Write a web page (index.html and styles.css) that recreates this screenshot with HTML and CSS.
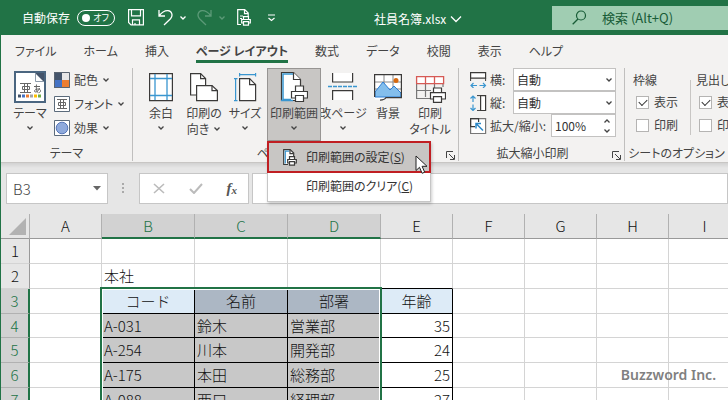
FILE: index.html
```html
<!DOCTYPE html>
<html lang="ja">
<head>
<meta charset="utf-8">
<title>社員名簿.xlsx</title>
<link rel="stylesheet" href="styles.css">
</head>
<body>
<svg class="defs" width="0" height="0" aria-hidden="true">
  <symbol id="chev" viewBox="0 0 8 6"><path d="M1.5 1.5 4 4l2.500-2.500" fill="none" stroke="currentColor" stroke-width="1.300"/></symbol>
  <symbol id="launch" viewBox="0 0 9 9"><path d="M.5 7V.5H7M3 3l5 5M8.500 4v4.500H4" fill="none" stroke="currentColor"/></symbol>
  <symbol id="printpage" viewBox="0 0 28 32">
    <path d="M1.500 1.500h12l7 7v21h-19z" fill="#fff" stroke="#3b3a39" stroke-width="1.200"/>
    <path d="M11 28.500H3V3h10" fill="none" stroke="#3a96d0" stroke-width="1.500"/>
    <path d="M1 29.500h12" stroke="#3a96d0" stroke-width="1.500"/>
    <path d="M13.500 1.500v7h7" fill="#fff" stroke="#3b3a39" stroke-width="1.200"/>
    <path d="M15.500 21v-6h8v6M15.500 27h-4v-6.500h16V27h-4M15.500 24.500h8v6h-8z" fill="#fff" stroke="#3b3a39" stroke-width="1.200"/>
  </symbol>
  <symbol id="printsmall" viewBox="0 0 15 17">
    <path d="M5 15.500H.7V.6h6.500l3.500 3.500V7" fill="#fff" stroke="#3b3a39" stroke-width="1.200"/>
    <path d="M2.300 14.500V2.200h4" fill="none" stroke="#3a96d0" stroke-width="1.200"/>
    <path d="M7 .6v4h3.700" fill="none" stroke="#3b3a39" stroke-width="1.200"/>
    <path d="M6.500 10.500V7.600h5v2.900M6.500 14H4.700v-3.500h8.600V14h-1.800M6.500 12.700h5v3.500h-5z" fill="#fff" stroke="#3b3a39" stroke-width="1.200"/>
  </symbol>
</svg>

<header class="titlebar">
  <div class="quick">
    <span class="autosave" id="autosave">自動保存</span>
    <button class="toggle" role="switch" aria-checked="false" aria-labelledby="autosave"><i></i>オフ</button>
    <button class="icon save" aria-label="保存"><svg width="16" height="17" viewBox="0 0 16 17"><path d="M.6.6h14.800v15.300H3L.6 13.500zM3.500.6v6.200h9V.6M4.500 15.900v-5h7v5M7 15.900v-2" fill="none" stroke="currentColor" stroke-width="1.200"/></svg></button>
    <button class="icon undo" aria-label="元に戻す"><svg width="15" height="17" viewBox="0 0 15 17"><path d="M1 1v6h6M1 7C4 3 7 1.500 10 1.700c4 .3 5.200 5 2.500 8L6 16" fill="none" stroke="currentColor" stroke-width="1.300"/></svg><svg width="8" height="6"><use href="#chev"/></svg></button>
    <button class="icon redo" aria-label="やり直し"><svg width="15" height="17" viewBox="0 0 15 17"><path d="M14 1v6H8M14 7C11 3 8 1.500 5 1.700c-4 .3-5.200 5-2.500 8L9 16" fill="none" stroke="currentColor" stroke-width="1.300"/></svg><svg width="8" height="6"><use href="#chev"/></svg></button>
    <button class="icon preview" aria-label="印刷プレビュー"><svg width="15" height="17" viewBox="0 0 15 17"><path d="M4 15.500H.7V.6h7l3.500 3.500V7M7.500.6v4h3.700M3 7h3M3 9.500h2" fill="none" stroke="currentColor" stroke-width="1.200"/><path d="M6.500 10.500V7.600h5v2.900M6.500 14H4.700v-3.500h8.600V14h-1.800M6.500 12.700h5v3.500h-5z" fill="none" stroke="currentColor" stroke-width="1.200"/></svg></button>
    <button class="icon custom" aria-label="カスタマイズ"><svg width="9" height="8" viewBox="0 0 9 8"><path d="M1 1h7M1.500 4l3 2.500 3-2.500" fill="none" stroke="currentColor" stroke-width="1.200"/></svg></button>
  </div>
  <button class="doc">社員名簿.xlsx<svg width="12" height="8" viewBox="0 0 12 8"><path d="M1 1.500 6 6.500l5-5" fill="none" stroke="currentColor" stroke-width="1.300"/></svg></button>
  <label class="search"><svg width="15" height="15" viewBox="0 0 15 15"><circle cx="9" cy="5.500" r="4.500" fill="none" stroke="currentColor" stroke-width="1.200"/><path d="M6 9 .7 14.300" stroke="currentColor" stroke-width="1.300"/></svg><input type="text" placeholder="検索 (Alt+Q)" aria-label="検索"></label>
</header>

<nav class="tabs">
  <a href="#file">ファイル</a><a href="#home">ホーム</a><a href="#insert">挿入</a><a href="#layout" class="active" aria-current="page">ページ レイアウト</a><a href="#formula">数式</a><a href="#data">データ</a><a href="#review">校閲</a><a href="#view">表示</a><a href="#help">ヘルプ</a>
</nav>

<section class="ribbon">
  <div class="group theme">
    <div class="tools">
      <button class="big"><svg width="32" height="32" viewBox="0 0 32 32"><path d="M1 1h30v30H1z" fill="#fff" stroke="#4b6680" stroke-width="2"/><path d="M21 2h9v9z" fill="#44546a"/><path d="M21.500 2v8.500H30" fill="none" stroke="#8d9baa"/><path d="M6 12.500h11M6 21.500h11M8.500 15.500h7v3h-7zM10.500 12.500v9M13.500 12.500v9" fill="none" stroke="#666"/><path d="M20 15.500h6M22.500 13.500c-.6 3 0 6 1 8M25.500 17c-1 4-5 5-5 3s5.500-3 6-.5c.2 1.200-.5 2-2 2.200" fill="none" stroke="#666"/><path d="M4 23.500h3v3H4z" fill="#44546a"/><path d="M8 23.500h3v3H8z" fill="#4472c4"/><path d="M12 23.500h3v3h-3z" fill="#ed7d31"/><path d="M16 23.500h3v3h-3z" fill="#a5a5a5"/><path d="M20 23.500h3v3h-3z" fill="#ffc000"/><path d="M24 23.500h3v3h-3z" fill="#70ad47"/></svg><span>テーマ</span><svg class="chev" width="8" height="6"><use href="#chev"/></svg></button>
      <div class="stack">
        <button><svg width="16" height="16"><path d="M0 0h8v8H0z" fill="#44546a"/><path d="M8 0h8v8H8z" fill="#e7e6e6"/><path d="M0 8h8v8H0z" fill="#4472c4"/><path d="M8 8h8v8H8z" fill="#ed7d31"/><path d="M.5.5h15v15H.5z" fill="none" stroke="#5a6470"/></svg>配色<svg width="8" height="6"><use href="#chev"/></svg></button>
        <button><svg width="16" height="16"><path d="M.5.5h15v15H.5z" fill="#fff" stroke="#5b6b7b"/><path d="M3 3.500h10M3 12.500h10M4.500 6.500h7v3h-7zM6.500 3.500v9M9.500 3.500v9" fill="none" stroke="#666"/></svg>フォント<svg width="8" height="6"><use href="#chev"/></svg></button>
        <button><svg width="16" height="16"><path d="M.5.5h15v15H.5z" fill="#fff" stroke="#5b6b7b"/><circle cx="8" cy="8" r="5.800" fill="#8faadc" stroke="#5576b8"/></svg>効果<svg width="8" height="6"><use href="#chev"/></svg></button>
      </div>
    </div>
    <h2>テーマ</h2>
  </div>

  <div class="group page">
    <div class="tools">
      <button class="big w40"><svg width="24" height="32" viewBox="0 0 24 32"><path d="M.6 2.600h22.800v27H.6z" fill="#fff" stroke="#3b3a39" stroke-width="1.200"/><path d="M6 3v26M18 3v26M1 7.500h22M1 24.500h22" stroke="#3a96d0" stroke-width="1.300"/></svg><span>余白</span><svg class="chev" width="8" height="6"><use href="#chev"/></svg></button>
      <button class="big w46"><svg width="30" height="32" viewBox="0 0 30 32"><path d="M1.600 2.600h10l5 5V24h-15z" fill="#fff" stroke="#3b3a39" stroke-width="1.200"/><path d="M11.600 2.600v5h5" fill="none" stroke="#3b3a39" stroke-width="1.200"/><path d="M7.600 14.600H23l5.400 5v10H7.600z" fill="#fff" stroke="#3b3a39" stroke-width="1.200"/><path d="M23 14.600v5h5.400" fill="none" stroke="#3b3a39" stroke-width="1.200"/></svg><span>印刷の</span><span class="line">向き<svg width="8" height="6"><use href="#chev"/></svg></span></button>
      <button class="big w36"><svg width="24" height="32" viewBox="0 0 24 32"><path d="M6.600 7.600h10l6 6v16h-16z" fill="#fff" stroke="#3b3a39" stroke-width="1.200"/><path d="M16.600 7.600v6h6" fill="none" stroke="#3b3a39" stroke-width="1.200"/><path d="M6.600 3.600h16M6.600 2v3.500M22.600 2v3.500M2.600 7.600v22M1 7.600h3.500M1 29.600h3.500" stroke="#3a96d0" stroke-width="1.200"/></svg><span>サイズ</span><svg class="chev" width="8" height="6"><use href="#chev"/></svg></button>
      <div class="dropdown">
        <button class="big open" aria-expanded="true"><svg width="28" height="32"><use href="#printpage"/></svg><span>印刷範囲</span><svg class="chev" width="8" height="6"><use href="#chev"/></svg></button>
        <div class="menu" role="menu">
          <button role="menuitem" class="hot"><svg width="15" height="17"><use href="#printsmall"/></svg><span>印刷範囲の設定(<u>S</u>)</span></button>
          <button role="menuitem"><span>印刷範囲のクリア(<u>C</u>)</span></button>
          <svg class="pointer" width="13" height="20" viewBox="0 0 13 20"><path d="M1 1v14.500l3.500-3.200 2.600 6 2.600-1.100-2.600-5.900H12z" fill="#fff" stroke="#222"/></svg>
        </div>
      </div>
      <button class="big w44"><svg width="30" height="32" viewBox="0 0 30 32"><path d="M4.600 2v9h20V2M4.600 29V19.600h20V29" fill="#fff" stroke="#3b3a39" stroke-width="1.200"/><path d="M0 15.500h30" stroke="#3a96d0" stroke-width="1.300" stroke-dasharray="4 1"/></svg><span>改ページ</span><svg class="chev" width="8" height="6"><use href="#chev"/></svg></button>
      <button class="big w46"><svg width="28" height="32" viewBox="0 0 28 32"><path d="M.6 3.600h26.800v23H11l-4 2H.6z" fill="#fff"/><path d="M10 4v22M19 4v22M1 11h26M1 18h26" stroke="#888"/><path d="M1 21 9 11l7 8 4-4 7 7v4H1z" fill="#83beec" stroke="#2b7cd3"/><circle cx="22" cy="9.500" r="2.500" fill="#d8690f"/><path d="M.6 26V3.600h26.800v23H12c-1 2-3 2.500-6 2.500" fill="none" stroke="#3b3a39" stroke-width="1.200"/></svg><span>背景</span></button>
      <button class="big w38"><svg width="31" height="32" viewBox="0 0 31 32"><path d="M1.600 12v15.500H15M10.500 12v14M19.500 12v5M1.600 19.500H16M28 12v4" fill="none" stroke="#777" stroke-width="1.200"/><path d="M1.600 5.600h27v7h-27zM10.500 5.600v7M19.500 5.600v7" fill="#fff" stroke="#d65a55" stroke-width="1.300"/><path d="M18.500 22v-5h8v5M18.500 28h-3v-6.400h15V28h-4M18.500 25.600h8v5.800h-8z" fill="#fff" stroke="#3b3a39" stroke-width="1.200"/></svg><span>印刷</span><span>タイトル</span></button>
    </div>
    <h2 class="with-launch">ページ設定</h2>
    <button class="launch" aria-label="ページ設定"><svg width="9" height="9"><use href="#launch"/></svg></button>
  </div>

  <div class="group scale">
    <div class="tools fields">
      <div class="field"><svg width="17" height="16" viewBox="0 0 17 16"><path d="M.6.6h15v5.500H.6z" fill="#fff" stroke="#3b3a39" stroke-width="1.200"/><path d="M.6 6v3M15.600 6v3" stroke="#3b3a39"/><path d="M1 13.500h6M9.500 13.500h6M3.500 11 1 13.500 3.500 16M13 11l2.500 2.500L13 16" fill="none" stroke="#3a96d0" stroke-width="1.200"/></svg><label for="w">横:</label><span class="box"><select id="w"><option>自動</option></select><svg width="8" height="6"><use href="#chev"/></svg></span></div>
      <div class="field"><svg width="17" height="16" viewBox="0 0 17 16"><path d="M10.600.6h5v15h-5z" fill="#fff" stroke="#3b3a39" stroke-width="1.200"/><path d="M7 .6h3M7 15.600h3" stroke="#3b3a39"/><path d="M3 1v6M3 9.500v6M.5 3.500 3 1l2.500 2.500M.5 13 3 15.500 5.500 13" fill="none" stroke="#3a96d0" stroke-width="1.200"/></svg><label for="h">縦:</label><span class="box"><select id="h"><option>自動</option></select><svg width="8" height="6"><use href="#chev"/></svg></span></div>
      <div class="field"><svg width="17" height="16" viewBox="0 0 17 16"><path d="M.6.600h15v15H.6z" fill="#fff" stroke="#777" stroke-width="1.200"/><path d="M5 8.600H.6V.6h8V4" fill="none" stroke="#3b3a39" stroke-width="1.200"/><path d="M6 5.500l7 7M6 10.500v-5h5" fill="none" stroke="#2b88c8" stroke-width="1.500"/></svg><label for="z">拡大/縮小:</label><span class="box zoom"><input id="z" type="text" value="100%"><span class="spin"><svg class="up" width="8" height="6"><use href="#chev"/></svg><svg width="8" height="6"><use href="#chev"/></svg></span></span></div>
    </div>
    <h2 class="with-launch">拡大縮小印刷</h2>
    <button class="launch" aria-label="拡大縮小印刷"><svg width="9" height="9"><use href="#launch"/></svg></button>
  </div>

  <div class="group options">
    <div class="tools">
      <fieldset><legend>枠線</legend><label><input type="checkbox" checked>表示</label><label><input type="checkbox">印刷</label></fieldset>
      <fieldset><legend>見出し</legend><label><input type="checkbox" checked>表示</label><label><input type="checkbox">印刷</label></fieldset>
    </div>
    <h2>シートのオプション</h2>
  </div>
</section>

<div class="formula">
  <div class="name"><input type="text" value="B3" aria-label="名前ボックス"><svg width="8" height="5"><path d="M0 0h8L4 4.500z" fill="#666"/></svg></div>
  <svg class="dots" width="2" height="11"><path d="M0 0h2v2H0zM0 4h2v2H0zM0 8h2v2H0z" fill="#aaa"/></svg>
  <div class="fx">
    <button aria-label="キャンセル"><svg width="12" height="11"><path d="m1 1 10 9M11 1 1 10" stroke="#bbb" stroke-width="1.600"/></svg></button>
    <button aria-label="入力"><svg width="14" height="11"><path d="m1 6 4 4 8-9" fill="none" stroke="#bbb" stroke-width="2"/></svg></button>
    <button class="fn" aria-label="関数の挿入">f<sub>x</sub></button>
  </div>
  <input class="bar" type="text" aria-label="数式バー">
</div>

<main class="sheet">
  <table>
    <colgroup><col class="c0"><col class="c1"><col class="c2"><col class="c2"><col class="c2"><col class="c1"><col class="c1"><col class="c1"><col class="c1"><col class="c1"></colgroup>
    <thead><tr><th class="corner"><svg width="17" height="17"><path d="M17 0v17H0z" fill="#b2b2b2"/></svg></th><th>A</th><th class="sel">B</th><th class="sel">C</th><th class="sel">D</th><th>E</th><th>F</th><th>G</th><th>H</th><th>I</th></tr></thead>
    <tbody>
      <tr><th>1</th><td></td><td></td><td></td><td></td><td></td><td></td><td></td><td></td><td></td></tr>
      <tr class="before"><th>2</th><td></td><td>本社</td><td></td><td></td><td></td><td></td><td></td><td></td><td></td></tr>
      <tr class="data head"><th>3</th><td></td><td class="cell">コード</td><td class="cell">名前</td><td class="cell">部署</td><td class="cell">年齢</td><td></td><td></td><td></td><td></td></tr>
      <tr class="data short"><th>4</th><td></td><td class="cell">A-031</td><td class="cell">鈴木</td><td class="cell">営業部</td><td class="cell">35</td><td></td><td></td><td></td><td></td></tr>
      <tr class="data"><th>5</th><td></td><td class="cell">A-254</td><td class="cell">川本</td><td class="cell">開発部</td><td class="cell">24</td><td></td><td></td><td></td><td></td></tr>
      <tr class="data"><th>6</th><td></td><td class="cell">A-175</td><td class="cell">本田</td><td class="cell">総務部</td><td class="cell">25</td><td></td><td></td><td></td><td></td></tr>
      <tr class="data"><th>7</th><td></td><td class="cell">A-088</td><td class="cell">西口</td><td class="cell">経理部</td><td class="cell">27</td><td></td><td></td><td></td><td></td></tr>
    </tbody>
  </table>
  <div class="selection"></div>
  <div class="credit">Buzzword Inc.</div>
</main>
</body>
</html>
```
FILE: styles.css
```css
* { box-sizing: border-box; }
html { height: 100%; overflow: hidden; }
body {
  margin: 0;
  height: 100%;
  overflow: hidden;
  display: flex;
  flex-direction: column;
  border-left: 1px solid #217346;
  background: #e6e6e6;
  color: #444;
  font: 12px/16px "Noto Sans CJK JP", sans-serif;
  font-feature-settings: "palt";
}
button, input, select { font: inherit; color: inherit; font-feature-settings: inherit; border: 0; padding: 0; margin: 0; background: none; border-radius: 0; }
button { white-space: nowrap; }
svg { display: block; flex: none; }
.defs { position: absolute; }

.titlebar {
  flex: none;
  height: 35px;
  display: grid;
  grid-template-columns: 373px 1fr 176px;
  align-items: center;
  background: #217346;
  color: #fff;
}
.quick { display: flex; align-items: center; padding-left: 21px; }
.toggle {
  display: flex;
  align-items: center;
  justify-content: space-between;
  width: 38px;
  height: 16px;
  margin-left: 7px;
  padding: 0 5px 0 4px;
  border: 1px solid #fff;
  border-radius: 8px;
  font-size: 9px;
  line-height: 14px;
}
.toggle i { width: 8px; height: 8px; border-radius: 4px; background: #fff; }
.icon { display: flex; align-items: center; gap: 6px; }
.save { margin-left: 13px; }
.undo { margin-left: 14px; }
.redo { margin-left: 10px; color: #5c9a78; }
.preview { margin-left: 11px; }
.custom { margin-left: 15px; }
.doc { display: flex; align-items: center; gap: 4px; padding-top: 2px; font-size: 12px; }
.search {
  display: flex;
  align-items: center;
  gap: 15px;
  height: 24px;
  padding-left: 20px;
  background: #a0cdb2;
  color: #185c37;
}
.search input { width: 100%; min-width: 0; outline: 0; font-size: 13px; }
.search input::placeholder { color: #185c37; opacity: 1; }

.tabs {
  flex: none;
  display: flex;
  gap: 27px;
  height: 31px;
  padding: 6px 14px 0;
  background: #f3f2f1;
  font-size: 12px;
  line-height: 20px;
  white-space: nowrap;
}
.tabs a { color: #444; text-decoration: none; height: 22px; }
.tabs .active { font-weight: 700; border-bottom: 3px solid #217346; }

.ribbon {
  flex: none;
  display: flex;
  height: 97px;
  padding-top: 2px;
  background: #f3f2f1;
  border-bottom: 1px solid #c8c6c4;
}
.group { position: relative; flex: none; height: 93px; display: flex; flex-direction: column; justify-content: space-between; border-right: 1px solid #c0bfbe; }
.theme { width: 132px; }
.page { width: 326px; }
.scale { width: 166px; }
.options { flex: 1 0 0; min-width: 0; border: 0; }
.group h2 { margin: 0; height: 16px; font-size: 12px; font-weight: 400; text-align: center; white-space: nowrap; }
.group h2.with-launch { padding-right: 18px; }
.launch { position: absolute; right: 3px; bottom: 1px; }
.tools { display: flex; }
.page .tools { padding-left: 8px; }
.big { display: flex; flex-direction: column; align-items: center; padding-top: 3px; height: 73px; }
.big > svg:first-child { margin-bottom: 2px; }
.big .chev { margin-top: 4px; }
.line { display: flex; align-items: center; gap: 4px; }
.w40 { width: 40px; }
.w46 { width: 46px; }
.w36 { width: 36px; }
.w44 { width: 44px; }
.w38 { width: 38px; }
.theme .big { width: 32px; margin: 0 8px 0 13px; }
.stack { display: flex; flex-direction: column; gap: 8px; padding-top: 4px; }
.stack button { display: flex; align-items: center; gap: 4px; }
.dropdown { position: relative; width: 54px; margin-left: 4px; }
.open { width: 54px; background: #c8c6c4; border: 1px solid #979593; padding-top: 2px; }
.menu {
  position: absolute;
  z-index: 5;
  left: 0;
  top: 73px;
  width: 164px;
  padding-bottom: 2px;
  background: #fff;
  border: 1px solid #c6c6c6;
  border-top: 0;
  box-shadow: 1px 2px 3px #0003;
  color: #333;
}
.menu button { display: flex; align-items: center; width: 100%; height: 26px; padding-left: 38px; }
.menu .hot { width: 164px; height: 32px; margin-left: -1px; padding-left: 14px; gap: 8px; border: 2px solid #c01e22; background: #c8c6c4; }
.pointer { position: absolute; left: 147px; top: 14px; }

.fields { flex-direction: column; padding: 0 8px 0 11px; }
.field { display: flex; align-items: center; gap: 3px; height: 23px; white-space: nowrap; }
.box { display: flex; align-items: center; position: relative; width: 103px; height: 23px; margin-left: auto; background: #fff; border: 1px solid #c3c2c1; }
.box > svg { position: absolute; right: 2px; top: 8px; pointer-events: none; }
.box select, .box input { appearance: none; width: 100%; height: 100%; padding-left: 3px; font-size: 12px; outline: 0; color: #333; }
.box.zoom { width: 65px; }
.spin { position: absolute; right: 4px; display: grid; gap: 4px; }
.up { transform: rotate(180deg); }

.options .tools { padding-top: 4px; }
fieldset { border: 0; margin: 0; padding: 0 0 0 8px; width: 65px; height: 63px; flex: none; display: flex; flex-direction: column; gap: 7px; }
fieldset + fieldset { border-left: 1px solid #c8c6c4; padding-left: 5px; }
legend { padding: 0; margin-bottom: 6px; white-space: nowrap; }
fieldset label { display: flex; align-items: center; gap: 5px; padding-left: 3px; white-space: nowrap; }
fieldset input { appearance: none; flex: none; width: 13px; height: 13px; background: #fff; border: 1px solid #b5b4b3; }
fieldset input:checked::after { content: ""; display: block; width: 7px; height: 4px; margin: 2px; border: solid #333; border-width: 0 0 1px 1px; transform: rotate(-45deg); }

.formula {
  flex: none;
  display: flex;
  align-items: center;
  height: 51px;
  padding: 0 0 0 5px;
  background: linear-gradient(#d2d2d2, #e6e6e6 5px);
}
.name, .fx, .bar { height: 31px; background: #fff; border: 1px solid #c6c6c6; }
.name { width: 102px; display: flex; align-items: center; padding: 0 6px; }
.name input { flex: 1; min-width: 0; font-size: 15px; font-weight: 300; outline: 0; }
.dots { margin: 0 15px 0 14px; }
.fx { width: 110px; display: flex; align-items: center; justify-content: space-between; padding: 0 11px 0 13px; }
.fn { font: italic 700 15px/20px "Liberation Serif", serif; color: #555; }
.fn sub { font-size: 11px; vertical-align: -1px; }
.bar { flex: 1; margin-left: 3px; min-width: 0; }

.sheet { position: relative; flex: 1; min-height: 0; overflow: hidden; background: #fff; font-size: 15px; font-feature-settings: normal; font-weight: 300; color: #111; }
table { width: 739px; table-layout: fixed; border-collapse: separate; border-spacing: 0; line-height: 20px; }
.c0 { width: 29px; }
.c1 { width: 72px; }
.c2 { width: 93px; }
th, td { height: 25px; padding: 0 2px; border: solid #d4d4d4; border-width: 0 1px 1px 0; white-space: nowrap; overflow: hidden; }
.short th, .short td { height: 24px; }
th { background: #e6e6e6; font-weight: 300; text-align: center; }
thead th { border-color: #b1b1b1; border-bottom-color: #999; }
thead .sel { background: #d2d2d2; color: #217346; border-bottom: 2px solid #217346; }
.corner svg { margin: 0 0 0 6px; }
tbody th { border-right-color: #999; }
.data th { background: #d2d2d2; color: #217346; border-right: 2px solid #217346; border-bottom-color: #b1b1b1; }
.data .cell { background: #c8c8c8; border-color: #000; }
.data .cell:nth-child(6) { background: #fff; text-align: right; }
.head .cell { background: #acb7c4; text-align: center; }
.data.head .cell:nth-child(3) { background: #ddebf7; }
.data.head .cell:nth-child(6) { background: #ddebf7; text-align: center; }
.before td:nth-child(6) { border-bottom-color: #000; }
.data.head .cell:nth-child(4), .data.head .cell:nth-child(5) { background: #acb7c4; }
.selection { position: absolute; left: 99px; top: 73px; width: 282px; bottom: -4px; border: 2px solid #217346; box-shadow: inset 0 0 0 1px #fff; }
.credit { position: absolute; right: 12px; bottom: 15px; color: #808080; font: 600 14px/20px "Noto Sans", sans-serif; }
```
